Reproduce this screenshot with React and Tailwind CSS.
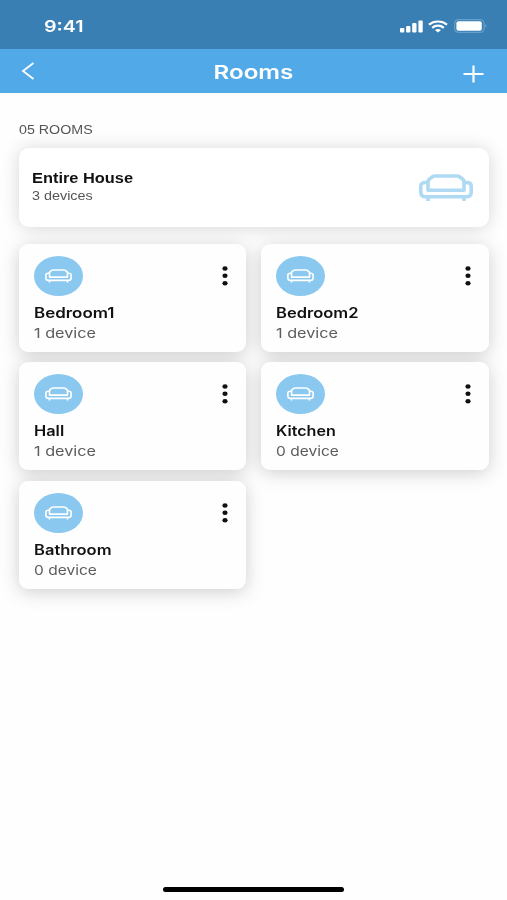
const rooms = [
  { name: "Bedroom1", devices: "1 device", scale: "scale-x-[1.21]", count: "scale-x-[1.2]" },
  { name: "Bedroom2", devices: "1 device", scale: "scale-x-[1.18]", count: "scale-x-[1.2]" },
  { name: "Hall", devices: "1 device", scale: "scale-x-[1.17]", count: "scale-x-[1.2]" },
  { name: "Kitchen", devices: "0 device", scale: "scale-x-[1.15]", count: "scale-x-[1.15]" },
  { name: "Bathroom", devices: "0 device", scale: "scale-x-[1.18]", count: "scale-x-[1.15]" },
];

function Sofa({ className, strokeWidth }) {
  return (
    <svg
      viewBox="0 0 54 28"
      preserveAspectRatio="none"
      fill="none"
      stroke="currentColor"
      strokeWidth={strokeWidth}
      strokeLinejoin="round"
      className={className}
    >
      <path d="M9 9V7.5Q9 6 10.5 5L13.5 2.7Q14.5 2 16 2H38Q39.5 2 40.5 2.7L43.5 5Q45 6 45 7.5V9" />
      <path d="M9 8.5H6.5Q1.8 8.5 1.8 12V18.5Q1.8 22.8 7 22.8H47Q52.2 22.8 52.2 18.5V12Q52.2 8.5 47.5 8.5H45V16.2H9Z" />
      <path d="M9 22.8V27M45 22.8V27" />
    </svg>
  );
}

function StatusIcons() {
  return (
    <div className="flex items-center text-white">
      <svg width="23" height="13" viewBox="0 0 23 13" fill="currentColor">
        <rect x="0" y="8" width="4.3" height="4.5" rx="1" />
        <rect x="6.1" y="6" width="4.3" height="6.5" rx="1" />
        <rect x="12.2" y="3" width="4.3" height="9.5" rx="1" />
        <rect x="18.4" y="0.5" width="4.3" height="12" rx="1" />
      </svg>
      <svg
        width="20"
        height="13"
        viewBox="0 0 20 13"
        fill="none"
        stroke="currentColor"
        strokeWidth="2.2"
        className="ml-[5px]"
      >
        <path d="M1 4.7C6 .4 14 .4 19 4.7" />
        <path d="M4.2 7.8C7.4 5 12.6 5 15.8 7.8" />
        <path d="M7 10C8.8 8.6 11.2 8.6 13 10L10 12.6Z" fill="currentColor" stroke="none" />
      </svg>
      <svg width="33" height="14" viewBox="0 0 33 14" className="ml-[6px]">
        <rect x="0.6" y="0.6" width="29.5" height="12.8" rx="4" fill="none" stroke="#669fc8" strokeWidth="1.2" />
        <rect x="2.4" y="2.2" width="25.4" height="9.6" rx="2" fill="#fff" />
        <path d="M31.2 5V9Q32.6 8 32.6 7T31.2 5Z" fill="#669fc8" />
      </svg>
    </div>
  );
}

function RoomCard({ room }) {
  return (
    <div className="h-[108px] rounded-[9px] bg-[#fefefe] pt-3 pr-[17px] pl-[15px]">
      <div className="flex h-10 items-center justify-between">
        <div className="flex h-10 w-[49px] items-center justify-center rounded-[50%] bg-[#8ac8ef] text-white">
          <Sofa className="h-[14px] w-[27px]" strokeWidth={3.2} />
        </div>
        <svg width="7" height="20" viewBox="0 0 7 20" fill="#111">
          <ellipse cx="3" cy="2.5" rx="2.6" ry="2.2" />
          <ellipse cx="3" cy="9.8" rx="2.6" ry="2.2" />
          <ellipse cx="3" cy="17.2" rx="2.6" ry="2.2" />
        </svg>
      </div>
      <p className={`mt-[7px] w-fit origin-left whitespace-nowrap text-[14px] leading-5 font-semibold text-[#111] ${room.scale}`}>
        {room.name}
      </p>
      <p className={`w-fit origin-left whitespace-nowrap text-[13.5px] leading-5 text-[#5c5c5c] ${room.count}`}>
        {room.devices}
      </p>
    </div>
  );
}

export default function App() {
  return (
    <div className="flex h-[900px] w-[507px] flex-col overflow-hidden bg-[#fefefe] font-['Inter',sans-serif]">
      <div className="flex h-[49px] shrink-0 items-center justify-between bg-[#397fb4] pt-[3px] pr-[20px] pl-[44px]">
        <span className="origin-left scale-x-[1.23] text-[16px] leading-5 font-semibold text-white">9:41</span>
        <StatusIcons />
      </div>

      <header className="flex h-[44px] shrink-0 items-center justify-between bg-[#51a9e7] pr-[23px] pl-[21px] text-white">
        <svg width="14" height="18" viewBox="0 0 14 18" fill="none" stroke="currentColor" strokeWidth="1.8">
          <path d="M12.5 1L2 9L12.5 17" />
        </svg>
        <h1 className="ml-[9px] scale-x-[1.27] pt-[3px] text-[19px] leading-6 font-semibold">Rooms</h1>
        <svg width="21" height="18" viewBox="0 0 21 18" fill="none" stroke="currentColor" strokeWidth="2.2" className="mt-[6px]">
          <path d="M0.5 9H20.5M10.5 0.5V17.5" />
        </svg>
      </header>

      <main className="flex-1 pt-[27px] pr-[18px] pl-[19px]">
        <p className="w-fit origin-left scale-x-[1.14] pt-px font-['Liberation_Sans',sans-serif] text-[12.5px] leading-[18px] text-[#555]">
          05 ROOMS
        </p>

        <div className="mt-[9px] flex h-[79px] items-center justify-between rounded-[10px] bg-white pr-[16px] pl-[13px] font-['Liberation_Sans',sans-serif] shadow-[0_1px_18px_rgba(0,0,0,0.16)]">
          <div className="pb-[2px]">
            <p className="w-fit origin-left scale-x-[1.17] text-[14px] leading-[18px] font-bold text-[#111]">Entire House</p>
            <p className="w-fit origin-left scale-x-[1.15] text-[12.5px] leading-[18px] text-[#555]">3 devices</p>
          </div>
          <Sofa className="h-[28px] w-[54px] text-[#b0d9f4]" strokeWidth={3.6} />
        </div>

        {/* one shared shadow, so neighbouring cards don't darken each other */}
        <div className="mt-[17px] grid grid-cols-[227px_228px] gap-x-[15px] gap-y-[10.4px] [filter:drop-shadow(0_3px_9px_rgba(0,0,0,0.19))]">
          {rooms.map((room) => (
            <RoomCard key={room.name} room={room} />
          ))}
        </div>
      </main>

      <div className="mb-[8px] h-[5px] w-[181px] shrink-0 self-center rounded-full bg-black" />
    </div>
  );
}
